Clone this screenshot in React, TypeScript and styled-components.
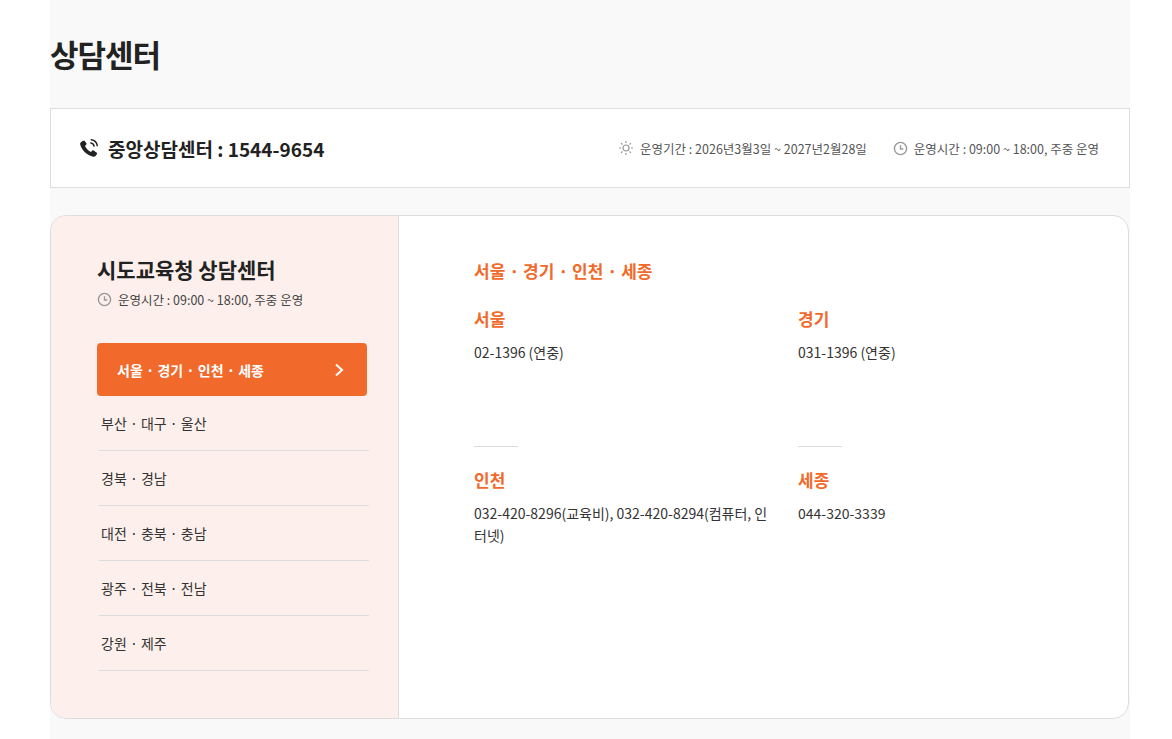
import React from "react";
import styled, { createGlobalStyle } from "styled-components";

const G = createGlobalStyle`
  body { margin:0; background:#fff; font-family:"Noto Sans CJK KR","Noto Sans",sans-serif; color:#222; }
`;
const Wrap = styled.div`margin-left:50px;width:1080px;background:#f9f9f9;min-height:739px;`;
const Title = styled.h1`margin:0;font-size:31px;font-weight:700;line-height:1;padding:38px 0 39px 0;color:#222;letter-spacing:-1px;`;
const Bar = styled.div`height:78px;background:#fff;border:1px solid #ddd;display:flex;align-items:center;justify-content:space-between;padding:0 30px 0 27px;`;
const Main = styled.div`display:flex;align-items:center;gap:8px;font-size:19px;font-weight:700;color:#222;`;
const Infos = styled.div`display:flex;gap:26px;font-size:12.5px;color:#555;`;
const Info = styled.span`display:flex;align-items:center;gap:6px;`;
const Card = styled.div`margin-top:27px;display:flex;height:502px;border:1px solid #ddd;border-radius:16px;overflow:hidden;background:#fff;width:1077px;`;
const Side = styled.div`width:301px;background:#fdf0ec;border-right:1px solid #ddd;padding:38px 0 0 46px;`;
const SideTitle = styled.h2`margin:0;font-size:21px;font-weight:700;line-height:30px;color:#222;`;
const SideTime = styled.div`margin-top:6px;display:flex;align-items:center;gap:6px;font-size:12.5px;color:#444;`;
const Menu = styled.div`margin-top:34px;width:270px;display:flex;flex-direction:column;`;
const Item = styled.div<{ $on?: boolean }>`
  height:${p => (p.$on ? 53 : 53)}px;display:flex;align-items:center;justify-content:space-between;
  font-size:14px;
  ${p => p.$on
    ? `background:#f26a2b;color:#fff;font-weight:700;border-radius:4px;padding:0 22px 0 20px;`
    : `color:#333;border-bottom:1px solid #ddd;padding:0 2px;margin-left:2px;width:266px;height:54px;`}
`;
const Content = styled.div`flex:1;padding:42px 0 0 75px;`;
const Heading = styled.h3`margin:0;font-size:17px;font-weight:700;color:#f26a2b;line-height:25px;`;
const Grid = styled.div`margin-top:24px;display:grid;grid-template-columns:324px 300px;`;
const Cell = styled.div<{ $second?: boolean }>`
  height:${p => (p.$second ? 120 : 118)}px;
  ${p => p.$second ? `border-top:0;position:relative;padding-top:21px;` : ``}
`;
const Line = styled.div`width:44px;height:1px;background:#ddd;margin-bottom:21px;`;
const CTitle = styled.div`font-size:17px;font-weight:700;color:#f26a2b;line-height:24px;`;
const CText = styled.div`margin-top:10px;font-size:14px;color:#333;line-height:22px;max-width:300px;`;

const Clock = ({ c = "#999" }) => (
  <svg width="15" height="15" viewBox="0 0 16 16"><circle cx="8" cy="8" r="6.5" fill="none" stroke={c} strokeWidth="1.5"/><path d="M8 4.5V8.5H11" fill="none" stroke={c} strokeWidth="1.5"/></svg>
);
const Sun = () => (
  <svg width="16" height="16" viewBox="0 0 16 16" stroke="#999" strokeWidth="1.2" fill="none"><circle cx="8" cy="8" r="3"/>{[0,45,90,135,180,225,270,315].map(a=>{const r=a*Math.PI/180;return <line key={a} x1={8+5*Math.cos(r)} y1={8+5*Math.sin(r)} x2={8+7*Math.cos(r)} y2={8+7*Math.sin(r)}/>;})}</svg>
);
const Phone = () => (
  <svg width="22" height="22" viewBox="0 0 24 24"><path d="M6.6 3.5l2.6 3.3c.4.5.3 1.1-.1 1.5L7.6 9.7c1.2 2.6 3.8 5.3 6.6 6.6l1.4-1.5c.4-.4 1-.5 1.5-.1l3.3 2.6c.5.4.6 1.1.2 1.6l-1.5 1.9c-.6.7-1.5 1-2.4.8C10 20.2 3.8 14 2.4 8.2c-.2-.9.1-1.8.8-2.4L5 4.3c.5-.4 1.2-.3 1.6.2z" fill="#222"/><path d="M14 6.5a4 4 0 013.5 3.5M14.5 3a7.5 7.5 0 016.5 6.5" stroke="#222" strokeWidth="1.6" fill="none" strokeLinecap="round"/></svg>
);

const rows = [
  ["서울", "02-1396 (연중)"],
  ["경기", "031-1396 (연중)"],
  ["인천", "032-420-8296(교육비), 032-420-8294(컴퓨터, 인터넷)"],
  ["세종", "044-320-3339"],
];

export default function App() {
  return (
    <Wrap>
      <G />
      <Title>상담센터</Title>
      <Bar>
        <Main><Phone />중앙상담센터 : 1544-9654</Main>
        <Infos>
          <Info><Sun />운영기간 : 2026년3월3일 ~ 2027년2월28일</Info>
          <Info><Clock />운영시간 : 09:00 ~ 18:00, 주중 운영</Info>
        </Infos>
      </Bar>
      <Card>
        <Side>
          <SideTitle>시도교육청 상담센터</SideTitle>
          <SideTime><Clock />운영시간 : 09:00 ~ 18:00, 주중 운영</SideTime>
          <Menu>
            <Item $on>서울 · 경기 · 인천 · 세종
              <svg width="12" height="14" viewBox="0 0 12 14"><path d="M3 1.5l6 5.5-6 5.5" stroke="#fff" strokeWidth="2" fill="none"/></svg>
            </Item>
            {["부산 · 대구 · 울산","경북 · 경남","대전 · 충북 · 충남","광주 · 전북 · 전남","강원 · 제주"].map(t => <Item key={t}>{t}</Item>)}
          </Menu>
        </Side>
        <Content>
          <Heading>서울 · 경기 · 인천 · 세종</Heading>
          <Grid>
            {rows.map(([t, v], i) => (
              <Cell key={t} $second={i >= 2}>
                {i >= 2 && <Line />}
                <CTitle>{t}</CTitle>
                <CText>{v}</CText>
              </Cell>
            ))}
          </Grid>
        </Content>
      </Card>
    </Wrap>
  );
}
